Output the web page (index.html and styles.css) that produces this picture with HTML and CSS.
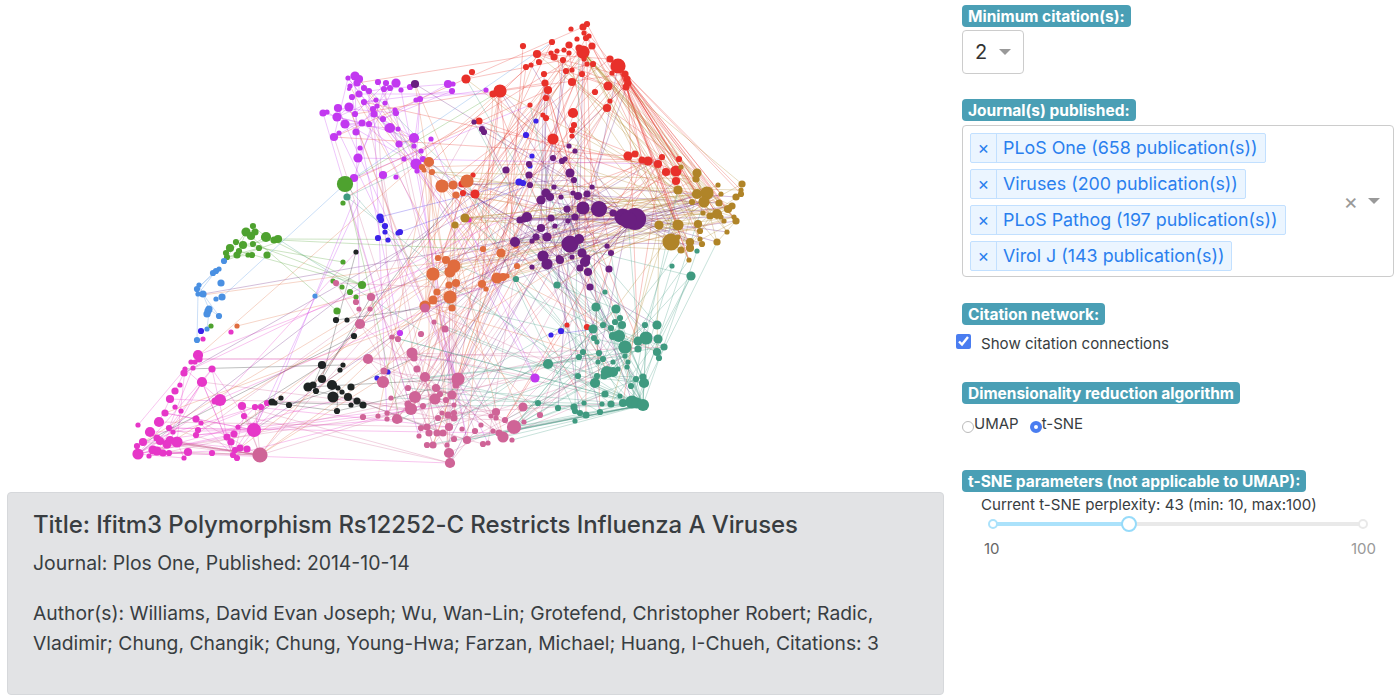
FILE: index.html
```html
<!DOCTYPE html>
<html lang="en">
<head>
  <meta charset="UTF-8">
  <meta name="viewport" content="width=device-width, initial-scale=1.0">
  <title>Citation Network</title>
  <link rel="stylesheet" href="styles.css">
</head>
<body>
  <div class="page">
    <div class="left">
      <svg id="network" class="network" width="950" height="492" viewBox="0 0 950 492"></svg>
      <div class="paper-card">
        <h4 class="paper-title">Title: Ifitm3 Polymorphism Rs12252-C Restricts Influenza A Viruses</h4>
        <p class="paper-journal">Journal: Plos One, Published: 2014-10-14</p>
        <p class="paper-authors">Author(s): Williams, David Evan Joseph; Wu, Wan-Lin; Grotefend, Christopher Robert; Radic, Vladimir; Chung, Changik; Chung, Young-Hwa; Farzan, Michael; Huang, I-Chueh, Citations: 3</p>
      </div>
    </div>
    <div class="right">
      <div class="control citations">
        <span class="badge">Minimum citation(s):</span>
        <div class="select-single">
          <span class="select-value">2</span>
          <span class="arrow"></span>
        </div>
      </div>

      <div class="control journals">
        <span class="badge">Journal(s) published:</span>
        <div class="select-multi">
          <div class="chips">
            <div class="chip"><span class="chip-x">×</span><span class="chip-label">PLoS One (658 publication(s))</span></div>
            <div class="chip"><span class="chip-x">×</span><span class="chip-label">Viruses (200 publication(s))</span></div>
            <div class="chip"><span class="chip-x">×</span><span class="chip-label">PLoS Pathog (197 publication(s))</span></div>
            <div class="chip"><span class="chip-x">×</span><span class="chip-label">Virol J (143 publication(s))</span></div>
          </div>
          <span class="clear-x">×</span>
          <span class="arrow"></span>
        </div>
      </div>

      <div class="control connections">
        <span class="badge">Citation network:</span>
        <label class="check-row">
          <input type="checkbox" checked>
          <span>Show citation connections</span>
        </label>
      </div>

      <div class="control algorithm">
        <span class="badge">Dimensionality reduction algorithm</span>
        <div class="radio-row">
          <label class="radio-item"><input type="radio" name="algo"><span>UMAP</span></label>
          <label class="radio-item"><input type="radio" name="algo" checked><span>t-SNE</span></label>
        </div>
      </div>

      <div class="control perplexity">
        <span class="badge">t-SNE parameters (not applicable to UMAP):</span>
        <div class="slider-text">Current t-SNE perplexity: 43 (min: 10, max:100)</div>
        <div class="slider">
          <div class="rail"><div class="rail-fill"></div></div>
          <span class="dot dot-start"></span>
          <span class="dot dot-end"></span>
          <span class="handle"></span>
        </div>
        <div class="slider-marks"><span class="mark-on">10</span><span class="mark-off">100</span></div>
      </div>
    </div>
  </div>
  <script src="script.js"></script>
</body>
</html>
```

FILE: styles.css
```css
body {
  margin: 0;
  background-color: white;
  font-family: Inter, "Noto Sans", sans-serif;
  color: #383d41;
}
.page {
  display: flex;
  width: 1400px;
  height: 699px;
  overflow: hidden;
}

.left {
  width: 950px;
  flex: none;
}
.network {
  display: block;
}
.paper-card {
  box-sizing: border-box;
  width: 937px;
  height: 203px;
  margin-left: 7px;
  padding: 17px 25px 0;
  background-color: #e2e3e5;
  border: 1px solid #d6d8db;
  border-radius: 4px;
}
.paper-title {
  margin: 0 0 9px;
  font-size: 24px;
  line-height: 29px;
  font-weight: 500;
  letter-spacing: -0.08px;
}
.paper-journal {
  margin: 0 0 20px;
  font-size: 19.4px;
  line-height: 30px;
}
.paper-authors {
  margin: 0;
  font-size: 19.3px;
  line-height: 30px;
}

.right {
  flex: 1;
  padding: 5px 7px 0 12px;
}
.control {
  display: flex;
  flex-direction: column;
  align-items: flex-start;
}
.badge {
  box-sizing: border-box;
  height: 22px;
  padding: 0 6px;
  background-color: #4a9fb5;
  border-radius: 4px;
  color: white;
  font-size: 15.5px;
  line-height: 23px;
  font-weight: 700;
  white-space: nowrap;
}

.arrow {
  width: 0;
  height: 0;
  border-left: 6px solid transparent;
  border-right: 6px solid transparent;
  border-top: 6px solid #999;
}
.select-single {
  box-sizing: border-box;
  display: flex;
  align-items: center;
  gap: 12px;
  width: 62px;
  height: 44px;
  margin-top: 3px;
  padding-left: 12px;
  border: 1px solid #ccc;
  border-radius: 4px;
}
.select-value {
  font-size: 20px;
  color: #333;
}

.journals {
  margin-top: 25px;
}
.select-multi {
  box-sizing: border-box;
  display: flex;
  align-items: center;
  width: 432px;
  height: 152px;
  margin-top: 4px;
  padding-left: 7px;
  border: 1px solid #ccc;
  border-radius: 4px;
}
.chips {
  flex: 1;
  display: flex;
  flex-direction: column;
  align-items: flex-start;
  gap: 6.3px;
  margin-top: 2px;
}
.chip {
  box-sizing: border-box;
  display: flex;
  height: 30px;
  background-color: #ebf5ff;
  border: 1px solid #c2e0ff;
  border-radius: 2px;
  color: #2a7fee;
  font-size: 17.85px;
  line-height: 27px;
}
.chip-x {
  width: 25px;
  text-align: center;
  border-right: 1px solid #c2e0ff;
}
.chip-label {
  padding: 0 7px 0 6px;
  white-space: nowrap;
}
.clear-x {
  margin-right: 10px;
  color: #999;
  font-size: 22px;
  line-height: 22px;
}
.select-multi .arrow {
  margin-right: 13px;
}

.connections {
  margin-top: 26px;
}
.check-row {
  display: flex;
  align-items: flex-start;
  gap: 10px;
  margin: 9px 0 0 -6px;
  font-size: 15.1px;
  line-height: 18px;
}
.check-row span {
  margin-top: 1px;
}
.check-row input {
  width: 15px;
  height: 15px;
  margin: 0;
  accent-color: #4a7df0;
}

.algorithm {
  margin-top: 29px;
}
.radio-row {
  display: flex;
  gap: 11px;
  margin-top: 10px;
}
.radio-item {
  display: flex;
  align-items: flex-start;
  font-size: 15px;
  line-height: 20px;
}
.radio-item input {
  appearance: none;
  box-sizing: border-box;
  width: 12px;
  height: 12px;
  margin: 7px 0 0;
  border: 1px solid #bbb;
  border-radius: 50%;
  background-color: white;
}
.radio-item input:checked {
  border: 4px solid #4a7df0;
}

.perplexity {
  margin-top: 36px;
}
.slider-text {
  margin: 3px 0 0 19px;
  font-size: 15.1px;
  line-height: 20px;
}
.slider {
  position: relative;
  width: 370px;
  height: 18px;
  margin: 0 0 0 31px;
}
.rail {
  position: absolute;
  top: 7px;
  left: 0;
  right: 0;
  height: 4px;
  background-color: #e9e9e9;
  border-radius: 2px;
}
.rail-fill {
  width: 136px;
  height: 4px;
  background-color: #abe2fb;
  border-radius: 2px;
}
.dot {
  position: absolute;
  top: 4px;
  box-sizing: border-box;
  width: 10px;
  height: 10px;
  background-color: white;
  border: 2px solid #e9e9e9;
  border-radius: 50%;
}
.dot-start {
  left: -5px;
  border-color: #abe2fb;
}
.dot-end {
  right: -5px;
}
.handle {
  position: absolute;
  top: 1px;
  left: 128px;
  box-sizing: border-box;
  width: 16px;
  height: 16px;
  background-color: white;
  border: 2px solid #96dbfa;
  border-radius: 50%;
}
.slider-marks {
  display: flex;
  justify-content: space-between;
  width: 392px;
  margin: 6px 0 0 22px;
  font-size: 15px;
  line-height: 20px;
}
.mark-on {
  color: #666;
}
.mark-off {
  color: #999;
}
```

FILE: script.js
```js
// citation network: one list per journal cluster, each node is "x,y,r"
const clusters = {
  red: { color: "#e8302a", nodes: "571,29,2 587,24,2.5 583,27,3 584,33,2 589,36,2 586,38,2.5 577,39,2 569,45,3 552,42,2.5 523,46,2.5 592,46,3 583,52,6 579,48,3 557,51,2 564,50,2 551,53,2 554,57,3 569,53,2 537,54,3.5 539,62,2.5 563,60,2.5 584,59,2 593,64,2.5 587,64,2 531,65,2 526,67,2.5 618,66,7 610,59,3 612,73,2 566,71,2.5 572,70,2 582,74,2.5 544,74,2.5 625,74,3 627,79,3 628,83,3 626,87,3 545,83,3 572,82,3.5 608,86,4 548,90,3.5 595,92,2.5 546,98,2.5 610,101,2 530,105,2 607,108,3.5 573,113,4.5 543,115,2 546,118,2.5 479,121,3 574,125,2.5 572,130,2.5 572,136,2 553,139,5 628,156,4 635,154,3 642,160,3 648,161,4 662,157,2.5 658,164,3.5 679,159,2.5 666,172,3.5 676,171,5 676,181,3.5 500,91,6 493,94,3 472,72,2.5 466,79,4 462,184,3 475,194,4 463,193,2.5 473,175,2 587,327,2.5 567,325,2" },
  violet: { color: "#c238f0", nodes: "355,76,4 359,79,3.5 348,78,2 357,83,3 350,86,2 349,89,1.5 364,88,2.5 369,91,2.5 378,82,2.5 386,83,2.5 396,83,4 390,88,2.5 384,89,2.5 401,90,2 410,87,2.5 448,84,3.5 453,84,2 452,91,2.5 486,90,2 359,94,3 352,97,2.5 364,102,2.5 376,100,2 385,103,2 416,100,2 420,99,2.5 338,108,3.5 349,107,4 377,106,2 373,109,2.5 355,114,2.5 374,114,3 395,110,2 396,113,2.5 323,113,3 327,112,2 337,117,4 383,119,2.5 345,124,4 362,123,3 369,124,2.5 390,128,4.5 388,128,3 398,129,2 356,132,3 339,133,2 334,137,3.5 414,138,4.5 431,139,2 399,144,3 414,146,2 360,148,2 421,151,2 358,158,4 404,159,2 423,159,2.5 416,164,5 417,171,2 354,178,3.5 383,175,3.5 396,177,2 535,378,4 400,333,2.5" },
  green: { color: "#4ea22f", nodes: "345,184,7.5 343,203,2 246,232,4 253,226,2.5 255,232,3 251,236,3.5 266,237,4.5 274,240,3 278,239,3.5 236,242,2.5 230,248,3.5 243,245,3.5 253,244,2.5 259,248,2.5 226,253,2.5 237,255,3 239,251,2.5 227,257,2.5 248,255,2 252,255,2.5 267,255,3 343,262,2 333,281,2 342,287,2 350,292,2.5 362,285,3.5 356,297,2 337,311,3 211,326,2" },
  sky: { color: "#4a90e2", nodes: "224,261,2.5 213,273,2.5 216,271,2.5 219,269,2 221,283,3 199,285,2 197,289,2.5 198,294,2 203,294,3 216,299,2 222,297,3 209,309,3 208,311,3 207,314,3 219,316,2.5 207,329,2 197,340,2.5 315,296,2" },
  indigo: { color: "#3b23e8", nodes: "201,331,2.5 380,217,3 381,220,2.5 385,226,2.5 385,232,2 400,232,2.5 398,233,2 378,238,2.5 388,240,2 536,121,2 526,135,2.5 532,156,2 530,166,2 519,182,3 523,183,2.5 377,378,2 388,372,2 561,331,2.5 551,335,2" },
  magenta: { color: "#e636c8", nodes: "198,355,4.5 199,359,3 191,362,2 195,362,2 212,369,3 185,369,2 184,373,3 193,368,2 202,382,4.5 180,385,2 175,391,3 170,399,3.5 220,400,5.5 215,401,3 242,406,3.5 255,407,2.5 261,407,2.5 267,403,2.5 175,407,2 181,411,2 165,413,3 244,416,2.5 196,419,3 159,422,4.5 138,425,2 201,423,2 169,428,2.5 173,432,2 254,430,6.5 198,430,2.5 196,435,2.5 234,434,3 238,427,2 150,432,4.5 157,438,3 227,437,3 231,442,3 143,442,3.5 160,441,3.5 170,440,3.5 177,442,5 137,446,2.5 167,444,4 153,450,4 157,451,4 163,453,3 169,453,2.5 188,452,3.5 212,453,2.5 235,450,2.5 240,448,3 247,449,3 138,454,5 149,456,2 184,458,2 233,455,2.5 237,458,2.5 231,332,2 203,339,2 469,220,2" },
  orange: { color: "#e06c3e", nodes: "237,326,2 429,162,4.5 422,167,2.5 424,170,2 432,172,2.5 442,186,6 453,185,4 467,181,6 456,195,3 483,249,2.5 501,253,4 516,246,2 517,266,2.5 438,258,2.5 446,260,3.5 433,274,6 454,266,6 450,272,5 482,284,3.5 486,289,2 497,278,5 503,277,3.5 507,276,2 449,285,3 456,283,3.5 437,292,3 450,297,6 433,300,4 425,306,5 452,308,3" },
  brown: { color: "#b08428", nodes: "697,173,4 696,179,3 681,167,2 678,190,4 697,194,4.5 707,193,6 704,202,5 718,185,2 721,194,2 742,184,3 741,190,2 741,194,2.5 736,197,3 692,202,2.5 719,203,3 732,206,3 728,209,3.5 703,213,2 717,214,4.5 710,216,3 721,217,2 724,221,2 734,217,2 736,221,3 698,224,3.5 678,225,5 659,225,4 700,231,2.5 727,232,2 671,242,8 678,237,2 700,239,2 690,242,3.5 717,242,3 702,244,2.5 690,248,3.5 681,250,3 465,218,4 455,225,3 689,260,2" },
  purple: { color: "#6a1f80", nodes: "415,84,3.5 474,122,2 482,129,2.5 484,132,2.5 506,170,3 569,146,2 575,151,2 553,158,2.5 562,161,2.5 565,159,2 529,164,2.5 529,175,3 570,173,4 574,180,2.5 530,185,2.5 554,187,2 592,187,2 546,193,4 550,197,3.5 561,197,2 541,200,4 573,193,2 578,196,3.5 587,194,3 583,208,6 599,209,7.5 613,213,3 623,217,8 635,219,10.5 628,220,8 567,209,3 527,217,4.5 520,220,3 524,219,3 551,218,3 575,217,3 568,221,2 541,228,3.5 555,226,2 515,242,4.5 536,237,3 547,237,4 532,241,2 570,244,8 579,239,4.5 607,246,2 611,253,2.5 543,256,5 559,258,2.5 582,253,4 572,257,2 587,258,3 547,264,5 560,260,3.5 532,267,2 580,268,3 585,262,4.5 588,272,3.5 609,269,3 590,287,3" },
  teal: { color: "#3f9a80", nodes: "347,197,3 697,251,2 516,279,2.5 557,285,3 605,292,2 672,266,2 691,276,4 596,307,4 616,309,4 620,318,2.5 615,322,2.5 622,325,3.5 603,325,2.5 611,328,2.5 593,329,4 645,325,2.5 657,325,4 613,336,3.5 619,336,5.5 594,338,2.5 597,342,2 638,341,4 646,338,6 658,339,4 664,347,3 625,347,6 638,349,3 657,352,3.5 599,353,2.5 583,352,2.5 579,357,2.5 625,356,2 659,358,2.5 598,362,2 603,359,2.5 613,362,2 628,362,2 627,367,2 548,364,4.5 618,369,2 607,372,5.5 613,372,4.5 604,376,3 578,376,2.5 597,376,2.5 636,379,2.5 643,377,3 644,383,4.5 595,383,4.5 631,386,2.5 605,394,3 620,396,2 538,403,2.5 584,403,2 602,404,2 611,404,3 623,403,3.5 632,402,6 637,403,5 643,405,5.5 558,408,2.5 574,407,3 575,411,2.5 580,413,2.5 586,415,3 600,412,2.5 575,421,2" },
  pink: { color: "#cf6497", nodes: "425,308,4 434,322,2 445,329,3 421,334,2.5 412,353,5 414,358,3 417,369,3 425,377,4.5 458,379,6 456,385,3 408,388,2.5 436,388,3.5 440,394,2.5 452,395,4 415,397,5.5 435,399,5 446,400,2.5 408,404,3 411,409,5.5 423,406,2.5 454,405,2 523,407,4 540,415,2.5 496,412,3.5 442,413,2 448,415,3 454,413,2.5 454,418,3 438,418,2.5 496,418,2 505,420,2.5 491,416,2 514,427,6.5 524,422,2 481,425,2 449,427,3.5 462,429,2 475,431,2.5 493,431,2 427,427,3 421,428,2.5 429,433,3 437,433,3 443,433,3 419,436,2 499,433,3 503,437,5 512,440,2 454,439,2.5 467,440,3.5 483,444,2.5 488,443,2 427,445,2.5 433,445,3 447,445,2 449,453,4.5 450,463,4.5 400,420,2 260,455,7 336,283,2.5 356,302,2.5 371,297,3.5 359,309,2 370,309,2 360,324,4.5 392,337,2 398,339,2.5 368,359,4.5 384,371,3 383,382,5.5 391,398,2 363,417,2.5 378,416,2 387,413,2 387,419,2 397,419,4.5" },
  black: { color: "#1f2424", nodes: "356,252,2 336,320,2.5 347,320,2 354,336,2.5 322,365,3.5 343,365,2 340,370,2 322,379,3.5 308,387,4 313,385,3 316,391,2.5 332,385,4.5 338,388,2 351,387,3 342,392,2 333,397,5 348,397,3.5 281,398,2 272,402,3 275,403,2 289,405,2.5 357,401,3 351,405,2 363,405,3 337,411,2.5" }
};

// how many edges run between two clusters
const links = [
  ["red", "red", 22], ["red", "brown", 26], ["red", "purple", 30], ["red", "orange", 24],
  ["red", "violet", 8], ["red", "teal", 14], ["red", "pink", 12],
  ["violet", "violet", 40], ["violet", "pink", 16], ["violet", "orange", 8], ["violet", "teal", 4],
  ["purple", "purple", 24], ["purple", "brown", 20], ["purple", "orange", 20], ["purple", "teal", 24], ["purple", "pink", 18],
  ["orange", "orange", 10], ["orange", "pink", 28], ["orange", "teal", 8], ["orange", "brown", 14],
  ["brown", "brown", 24], ["brown", "teal", 12],
  ["teal", "teal", 40], ["teal", "pink", 24],
  ["pink", "pink", 36], ["magenta", "magenta", 36], ["magenta", "pink", 16],
  ["magenta", "orange", 8], ["magenta", "purple", 3], ["magenta", "black", 6],
  ["black", "black", 10], ["black", "pink", 8], ["black", "orange", 3],
  ["green", "green", 12], ["sky", "sky", 6]
];

// hubs that many papers cite, x,y,cluster to fan out to,count,colour
const fans = [
  [618, 66, "brown", 24, "#e8302a"], [583, 52, "brown", 14, "#b08428"], [635, 219, "brown", 12, "#6a1f80"],
  [635, 219, "purple", 14, "#6a1f80"], [643, 405, "teal", 16, "#3f9a80"], [643, 405, "pink", 14, "#3f9a80"],
  [260, 455, "magenta", 16, "#cf6497"], [254, 430, "magenta", 10, "#e636c8"], [514, 427, "teal", 10, "#3f9a80"]
];

// long single lines across the empty part of the plot, x1,y1,x2,y2,colour
const extraLines = [
  [278, 239, 560, 240, "#4ea22f"], [278, 240, 490, 250, "#4ea22f"], [203, 294, 628, 220, "#6a1f80"],
  [203, 295, 600, 240, "#e06c3e"], [222, 297, 345, 184, "#4a90e2"], [345, 184, 552, 42, "#4a90e2"],
  [224, 261, 278, 242, "#4ea22f"], [198, 294, 197, 340, "#4a90e2"], [207, 329, 209, 312, "#4a90e2"],
  [198, 359, 450, 360, "#e636c8"], [199, 355, 500, 91, "#e06c3e"], [345, 184, 500, 91, "#4ea22f"],
  [345, 184, 548, 90, "#e8302a"], [345, 184, 480, 340, "#3f9a80"], [345, 184, 400, 420, "#4ea22f"],
  [278, 239, 420, 330, "#3f9a80"], [272, 402, 354, 200, "#c238f0"], [254, 430, 360, 200, "#c238f0"],
  [260, 455, 633, 220, "#e06c3e"], [260, 455, 600, 215, "#e06c3e"], [254, 430, 583, 208, "#6a1f80"],
  [400, 380, 548, 364, "#3f9a80"], [425, 378, 548, 365, "#3f9a80"], [458, 379, 535, 378, "#3f9a80"],
  [551, 335, 593, 329, "#3b23e8"], [400, 232, 530, 185, "#3b23e8"], [380, 217, 519, 182, "#3b23e8"]
];

const svgNs = "http://www.w3.org/2000/svg";
const svg = document.getElementById("network");

// small seeded generator so the picture is the same every time
let seed = 42;
function rand() {
  seed = (seed * 1664525 + 1013904223) % 4294967296;
  return seed / 4294967296;
}

for (const name in clusters) {
  clusters[name].points = clusters[name].nodes.split(" ").map(n => n.split(",").map(Number));
}

// bigger nodes collect more of the edges
function pick(points) {
  let best = points[Math.floor(rand() * points.length)];
  const other = points[Math.floor(rand() * points.length)];
  if (other[2] > best[2] && rand() < 0.8) best = other;
  return best;
}

function addLine(x1, y1, x2, y2, color) {
  const line = document.createElementNS(svgNs, "line");
  line.setAttribute("x1", x1);
  line.setAttribute("y1", y1);
  line.setAttribute("x2", x2);
  line.setAttribute("y2", y2);
  line.setAttribute("stroke", color);
  line.setAttribute("stroke-width", "0.8");
  line.setAttribute("stroke-opacity", "0.36");
  svg.appendChild(line);
}

for (const [a, b, count] of links) {
  for (let i = 0; i < count; i++) {
    const from = pick(clusters[a].points);
    const to = pick(clusters[b].points);
    const color = rand() < 0.5 ? clusters[a].color : clusters[b].color;
    addLine(from[0], from[1], to[0], to[1], color);
  }
}
for (const [x, y, name, count, color] of fans) {
  const points = clusters[name].points;
  for (let i = 0; i < count; i++) {
    const to = points[Math.floor(rand() * points.length)];
    addLine(x, y, to[0], to[1], color);
  }
}
extraLines.forEach(l => addLine(l[0], l[1], l[2], l[3], l[4]));

for (const name in clusters) {
  for (const [x, y, r] of clusters[name].points) {
    const circle = document.createElementNS(svgNs, "circle");
    circle.setAttribute("cx", x);
    circle.setAttribute("cy", y);
    circle.setAttribute("r", r + 0.6);
    circle.setAttribute("fill", clusters[name].color);
    svg.appendChild(circle);
  }
}
```
